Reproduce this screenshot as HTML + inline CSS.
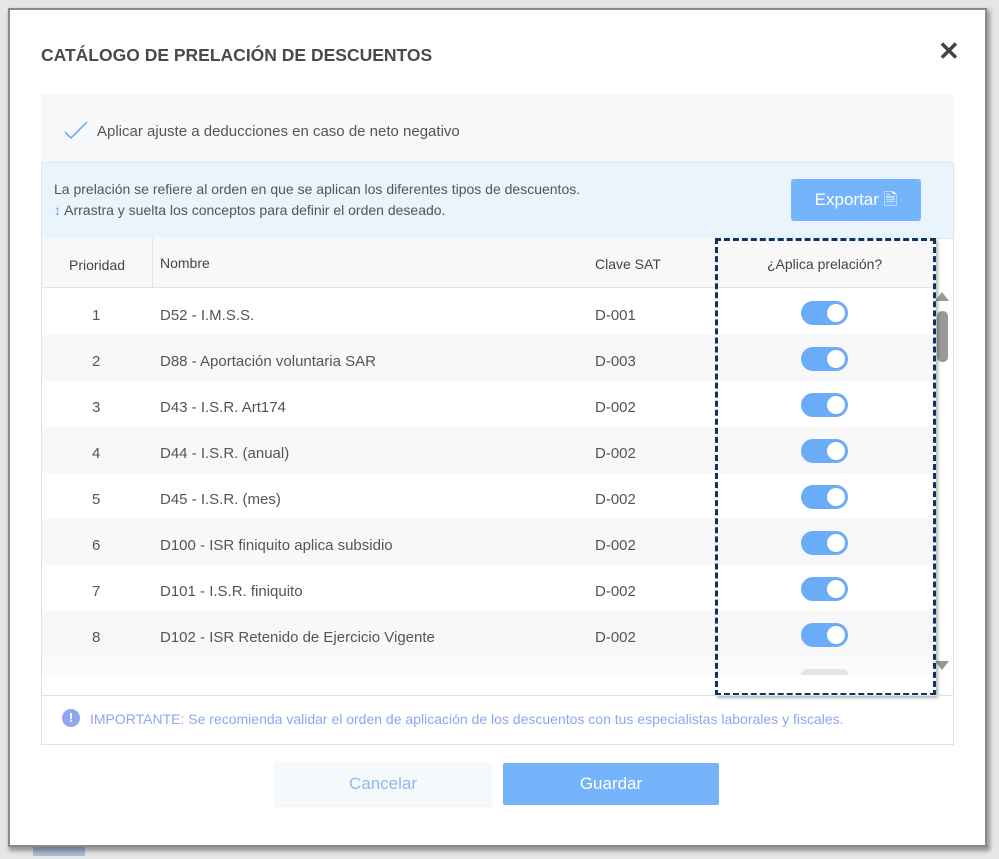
<!DOCTYPE html>
<html><head><meta charset="utf-8"><style>
body{margin:0;width:999px;height:859px;background:#e6e6e6;position:relative;overflow:hidden;font-family:"Liberation Sans",sans-serif}
.abs{position:absolute}
.modal{left:10px;top:10px;width:975px;height:835px;background:#fff;box-shadow:0 0 0 2px #8a8a8a,2px 3px 4px 3px rgba(0,0,0,.35)}
.row{position:absolute;left:42px;width:893px;height:46px;font-size:15px;color:#555}
.row span{position:absolute;top:18px}
.tg{position:absolute;left:759px;top:12px;width:47px;height:24px;border-radius:12px;background:#6aacf8}
.tg:after{content:"";position:absolute;right:3px;top:3px;width:18px;height:18px;border-radius:50%;background:#fff}
</style></head><body>
<div class="abs" style="left:33px;top:846px;width:52px;height:10px;background:#a9bcd4"></div>
<div class="abs modal"></div>
<div class="abs" style="left:41px;top:45px;font-size:17.5px;font-weight:bold;color:#4a4a4a">CATÁLOGO DE PRELACIÓN DE DESCUENTOS</div>
<div class="abs" style="left:938px;top:36px;font-size:26px;font-weight:bold;color:#444">✕</div>
<div class="abs" style="left:41px;top:94px;width:912px;height:68px;background:#f7f8fa"></div>
<svg class="abs" style="left:64px;top:120px" width="24" height="20"><path d="M1 12 L7 18 L23 2" fill="none" stroke="#5fa8f5" stroke-width="1.5"/></svg>
<div class="abs" style="left:97px;top:123px;font-size:15px;color:#555">Aplicar ajuste a deducciones en caso de neto negativo</div>
<div class="abs" style="left:41px;top:162px;width:911px;height:75px;background:#eaf4fd;border:1px solid #d8e6f3"></div>
<div class="abs" style="left:54px;top:181px;font-size:14px;color:#555">La prelación se refiere al orden en que se aplican los diferentes tipos de descuentos.</div>
<div class="abs" style="left:54px;top:202px;font-size:14px;color:#555"><span style="color:#5fa8f5">↕</span> Arrastra y suelta los conceptos para definir el orden deseado.</div>
<div class="abs" style="left:791px;top:179px;width:130px;height:42px;background:#75b4fb;border-radius:3px;color:#fff;font-size:17px;line-height:42px;text-align:center">Exportar 🗎</div>
<div class="abs" style="left:41px;top:238px;width:911px;height:457px;border:1px solid #e3e3e3;border-top:none"></div>
<div class="abs" style="left:42px;top:238px;width:893px;height:49px;background:#f8f8f8;border-bottom:1px solid #e3e3e3;font-size:14px;color:#444">
<span class="abs" style="left:27px;top:19px">Prioridad</span>
<span class="abs" style="left:110px;top:0;height:49px;border-left:1px solid #e3e3e3"></span>
<span class="abs" style="left:118px;top:17px">Nombre</span>
<span class="abs" style="left:553px;top:18px">Clave SAT</span>
<span class="abs" style="left:725px;top:18px">¿Aplica prelación?</span></div>
<div class="row" style="top:289px"><span style="left:50px">1</span><span style="left:118px">D52 - I.M.S.S.</span><span style="left:553px">D-001</span><div class="tg"></div></div>
<div class="row" style="top:335px;background:#f8f8f8"><span style="left:50px">2</span><span style="left:118px">D88 - Aportación voluntaria SAR</span><span style="left:553px">D-003</span><div class="tg"></div></div>
<div class="row" style="top:381px"><span style="left:50px">3</span><span style="left:118px">D43 - I.S.R. Art174</span><span style="left:553px">D-002</span><div class="tg"></div></div>
<div class="row" style="top:427px;background:#f8f8f8"><span style="left:50px">4</span><span style="left:118px">D44 - I.S.R. (anual)</span><span style="left:553px">D-002</span><div class="tg"></div></div>
<div class="row" style="top:473px"><span style="left:50px">5</span><span style="left:118px">D45 - I.S.R. (mes)</span><span style="left:553px">D-002</span><div class="tg"></div></div>
<div class="row" style="top:519px;background:#f8f8f8"><span style="left:50px">6</span><span style="left:118px">D100 - ISR finiquito aplica subsidio</span><span style="left:553px">D-002</span><div class="tg"></div></div>
<div class="row" style="top:565px"><span style="left:50px">7</span><span style="left:118px">D101 - I.S.R. finiquito</span><span style="left:553px">D-002</span><div class="tg"></div></div>
<div class="row" style="top:611px;background:#f8f8f8"><span style="left:50px">8</span><span style="left:118px">D102 - ISR Retenido de Ejercicio Vigente</span><span style="left:553px">D-002</span><div class="tg"></div></div>
<div class="row" style="top:657px;height:18px;background:#fbfbfb"><div style="position:absolute;left:759px;top:12px;width:47px;height:6px;border-radius:6px 6px 0 0;background:#e5e5e5"></div></div>
<div class="abs" style="left:935px;top:292px;width:0;height:0;border-left:7px solid transparent;border-right:7px solid transparent;border-bottom:9px solid #999"></div>
<div class="abs" style="left:937px;top:311px;width:11px;height:51px;border-radius:5px;background:#999"></div>
<div class="abs" style="left:935px;top:661px;width:0;height:0;border-left:7px solid transparent;border-right:7px solid transparent;border-top:9px solid #999"></div>
<div class="abs" style="left:715px;top:238px;width:215px;height:452px;border:3px dashed #0b3463;box-shadow:2px 2px 3px rgba(0,0,0,.3)"></div>
<div class="abs" style="left:41px;top:695px;width:911px;height:48px;border:1px solid #e3e3e3;border-top:1px solid #dde3ea"></div>
<div class="abs" style="left:62px;top:709px;width:18px;height:18px;border-radius:50%;background:#8fa5f2;color:#fff;font-size:13px;font-weight:bold;text-align:center;line-height:18px">!</div>
<div class="abs" style="left:90px;top:711px;font-size:14px;color:#8fa5f2">IMPORTANTE: Se recomienda validar el orden de aplicación de los descuentos con tus especialistas laborales y fiscales.</div>
<div class="abs" style="left:275px;top:763px;width:216px;height:42px;background:#f6f9fc;box-shadow:0 1px 3px rgba(0,0,0,.08);color:#8fb8f0;font-size:17px;line-height:42px;text-align:center">Cancelar</div>
<div class="abs" style="left:503px;top:763px;width:216px;height:42px;background:#75b4fb;border-radius:2px;color:#fff;font-size:17px;line-height:42px;text-align:center">Guardar</div>
</body></html>
